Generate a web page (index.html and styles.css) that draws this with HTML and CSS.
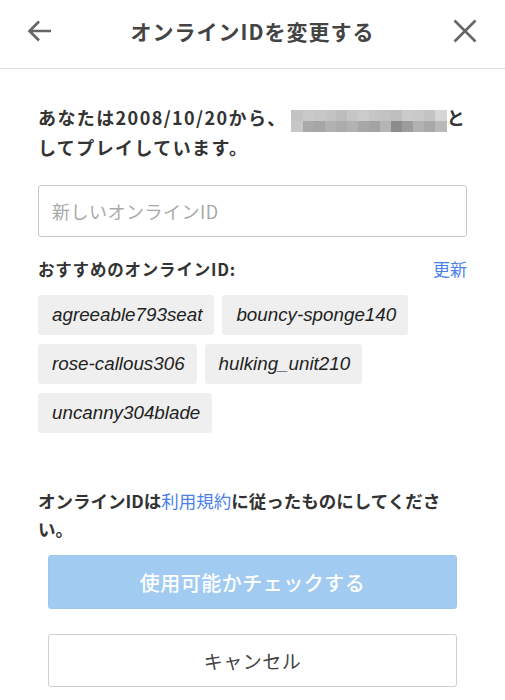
FILE: index.html
```html
<!DOCTYPE html>
<html lang="ja">
<head>
    <meta charset="UTF-8">
    <meta name="viewport" content="width=device-width, initial-scale=1.0">
    <title>オンラインIDを変更する</title>
    <link rel="stylesheet" href="styles.css">
</head>
<body>
    <div class="header">
        <button class="icon-btn" aria-label="戻る">
            <svg width="26" height="26" viewBox="0 0 26 26">
                <path d="M24 13H3M12 3.5L2.5 13 12 22.5" fill="none" stroke="#666" stroke-width="2.6"/>
            </svg>
        </button>
        <h1>オンラインIDを変更する</h1>
        <button class="icon-btn" aria-label="閉じる">
            <svg width="26" height="26" viewBox="0 0 26 26">
                <path d="M2.5 2.5L23.5 23.5M23.5 2.5L2.5 23.5" fill="none" stroke="#666" stroke-width="2.6"/>
            </svg>
        </button>
    </div>

    <div class="content">
        <p class="intro">
            あなたは2008/10/20から、<span class="nowrap"><svg class="mosaic" width="156" height="22" viewBox="0 0 156 22">
                <g>
                    <rect x="0" y="0" width="12" height="11" fill="#c3c3c3"/>
                    <rect x="12" y="0" width="11" height="11" fill="#c9c9c9"/>
                    <rect x="23" y="0" width="11" height="11" fill="#c7c7c7"/>
                    <rect x="34" y="0" width="11" height="11" fill="#c4c4c4"/>
                    <rect x="45" y="0" width="11" height="11" fill="#bdbdbd"/>
                    <rect x="56" y="0" width="11" height="11" fill="#c6c6c6"/>
                    <rect x="67" y="0" width="11" height="11" fill="#cbcbcb"/>
                    <rect x="78" y="0" width="11" height="11" fill="#c5c5c5"/>
                    <rect x="89" y="0" width="11" height="11" fill="#c2c2c2"/>
                    <rect x="100" y="0" width="11" height="11" fill="#bfbfbf"/>
                    <rect x="111" y="0" width="11" height="11" fill="#cbcbcb"/>
                    <rect x="122" y="0" width="11" height="11" fill="#c9c9c9"/>
                    <rect x="133" y="0" width="11" height="11" fill="#c4c4c4"/>
                    <rect x="144" y="0" width="12" height="11" fill="#d6d6d6"/>
                    <rect x="0" y="11" width="12" height="11" fill="#c7c7c7"/>
                    <rect x="12" y="11" width="11" height="11" fill="#a9a9a9"/>
                    <rect x="23" y="11" width="11" height="11" fill="#a6a6a6"/>
                    <rect x="34" y="11" width="11" height="11" fill="#b1b1b1"/>
                    <rect x="45" y="11" width="11" height="11" fill="#acacac"/>
                    <rect x="56" y="11" width="11" height="11" fill="#b2b2b2"/>
                    <rect x="67" y="11" width="11" height="11" fill="#a7a7a7"/>
                    <rect x="78" y="11" width="11" height="11" fill="#a3a3a3"/>
                    <rect x="89" y="11" width="11" height="11" fill="#b5b5b5"/>
                    <rect x="100" y="11" width="11" height="11" fill="#8c8c8c"/>
                    <rect x="111" y="11" width="11" height="11" fill="#9c9c9c"/>
                    <rect x="122" y="11" width="11" height="11" fill="#b1b1b1"/>
                    <rect x="133" y="11" width="11" height="11" fill="#a8a8a8"/>
                    <rect x="144" y="11" width="12" height="11" fill="#b9b9b9"/>
                </g>
            </svg>と</span><br>してプレイしています。
        </p>

        <input class="id-input" type="text" placeholder="新しいオンラインID">

        <div class="suggest-head">
            <span>おすすめのオンラインID:</span>
            <a href="#" class="link">更新</a>
        </div>

        <div class="chips">
            <span class="chip">agreeable793seat</span>
            <span class="chip">bouncy-sponge140</span>
            <span class="chip">rose-callous306</span>
            <span class="chip">hulking_unit210</span>
            <span class="chip">uncanny304blade</span>
        </div>

        <p class="note"><span>オンラインIDは</span><a href="#" class="link">利用規約</a><span>に従ったものにしてください。</span></p>

        <div class="actions">
            <button class="btn btn-primary">使用可能かチェックする</button>
            <button class="btn btn-cancel">キャンセル</button>
        </div>
    </div>
</body>
</html>
```

FILE: styles.css
```css
* {
    margin: 0;
    padding: 0;
    box-sizing: border-box;
}

body {
    font-family: "Noto Sans CJK JP", "Noto Sans", sans-serif;
    background: #fff;
    color: #333;
    width: 505px;
}

.header {
    height: 69px;
    border-bottom: 1px solid #dedede;
    display: flex;
    align-items: center;
    justify-content: space-between;
    padding: 0 27px 6px 27px;
}

.header h1 {
    font-size: 21px;
    font-weight: 700;
    color: #444;
    letter-spacing: 1px;
}

.icon-btn {
    background: none;
    border: none;
    width: 26px;
    height: 26px;
    display: flex;
}

.content {
    padding: 33px 38px 0;
}

.intro {
    font-size: 18px;
    font-weight: 700;
    line-height: 30px;
    letter-spacing: 1.4px;
    color: #333;
}

.nowrap {
    white-space: nowrap;
}

.mosaic {
    display: inline-block;
    vertical-align: -1px;
    margin: -6px 0 -6px 4px;
}

.id-input {
    display: block;
    width: 100%;
    height: 52px;
    margin-top: 23px;
    border: 1px solid #c8c8c8;
    border-radius: 3px;
    padding: 0 13px;
    font-family: inherit;
    font-size: 18px;
    letter-spacing: 0.5px;
    color: #333;
    outline: none;
}

.id-input::placeholder {
    color: #a9a9a9;
}

.suggest-head {
    margin-top: 21px;
    display: flex;
    justify-content: space-between;
    align-items: center;
    font-size: 16.5px;
    font-weight: 700;
    line-height: 22px;
    letter-spacing: 0.8px;
}

.suggest-head .link {
    font-weight: 400;
    font-size: 17px;
    letter-spacing: 0;
}

.link {
    color: #4a80e8;
    text-decoration: none;
}

.chips {
    margin-top: 15px;
    display: flex;
    flex-wrap: wrap;
    gap: 9px 8px;
}

.chip {
    height: 40px;
    display: flex;
    align-items: center;
    padding: 0 12px 0 14px;
    background: #efefef;
    border-radius: 3px;
    font-family: "Liberation Sans", Arial, sans-serif;
    font-style: italic;
    font-size: 18.8px;
    color: #222;
}

.note {
    margin-top: 54px;
    font-size: 17.5px;
    font-weight: 700;
    line-height: 28px;
    color: #333;
    padding-right: 16px;
}

.note .link {
    font-weight: 400;
}

.actions {
    padding: 12px 10px 0;
    display: flex;
    flex-direction: column;
    gap: 25px;
}

.btn {
    display: block;
    width: 100%;
    border-radius: 3px;
    font-family: inherit;
    cursor: pointer;
}

.btn-primary {
    height: 54px;
    background: #a2cbf1;
    border: 1px solid #a0c6ea;
    color: #fff;
    font-size: 20px;
    font-weight: 500;
    letter-spacing: 0.5px;
}

.btn-cancel {
    height: 53px;
    background: #fff;
    border: 1px solid #cfcfcf;
    color: #444;
    font-size: 19px;
    letter-spacing: 0.5px;
}
```
